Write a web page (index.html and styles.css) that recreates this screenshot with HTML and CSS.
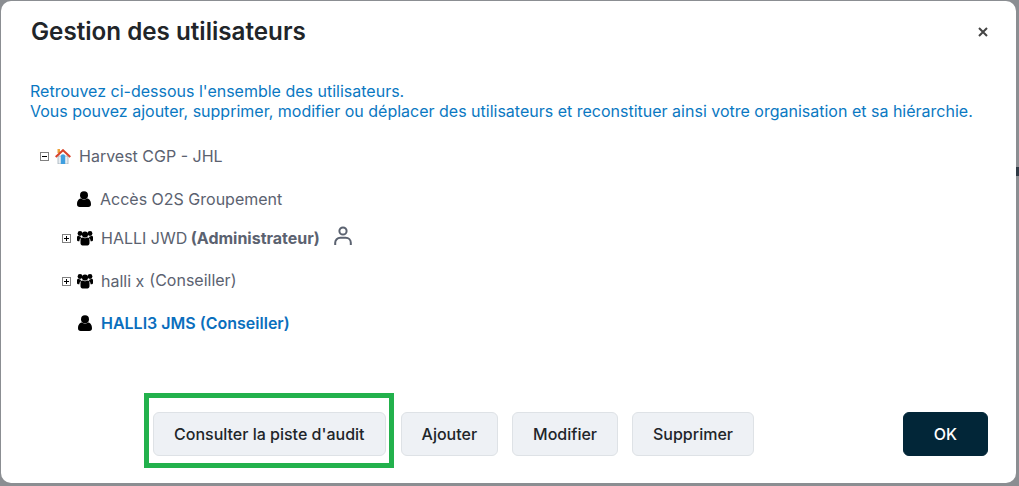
FILE: index.html
```html
<!DOCTYPE html>
<html lang="fr">
<head>
<meta charset="utf-8">
<title>Gestion des utilisateurs</title>
<link rel="stylesheet" href="styles.css">
</head>
<body>
<span class="peek"></span>
<div class="modal">
  <header class="head">
    <h1 class="title">Gestion des utilisateurs</h1>
    <svg class="close" viewBox="0 0 10 10" width="10" height="10"><path d="M1 1L9 9M9 1L1 9"/></svg>
  </header>
  <p class="intro">Retrouvez ci-dessous l'ensemble des utilisateurs.<br>Vous pouvez ajouter, supprimer, modifier ou déplacer des utilisateurs et reconstituer ainsi votre organisation et sa hiérarchie.</p>
  <ul class="tree">
    <li class="root">
      <svg class="tog" viewBox="0 0 9 9" width="9" height="9"><rect x=".5" y=".5" width="8" height="8" class="box"/><path d="M2 4.5H7" class="mark"/></svg>
      <svg class="home" viewBox="0 0 16 15" width="16" height="15"><path d="M2.500 0h2.500v4H2.500z" fill="#eda13a"/><path d="M3 7h10v8H3z" fill="#e9eef2" stroke="#9aa7b2" stroke-width=".7"/><path d="M5.800 7.500a2.200 2.200 0 0 1 4.400 0V15H5.800z" fill="#3f9fe0"/><path d="M0.700 8L8 1.200 15.300 8" fill="none" stroke="#d8432a" stroke-width="2"/></svg>
      <span class="lab">Harvest CGP - JHL</span>
    </li>
    <li class="n1">
      <svg class="user" viewBox="0 0 16 16" width="16" height="16"><use href="#u"/></svg>
      <span class="lab">Accès O2S Groupement</span>
    </li>
    <li class="n2">
      <svg class="tog" viewBox="0 0 9 9" width="9" height="9"><rect x=".5" y=".5" width="8" height="8" class="box"/><path d="M2 4.5H7M4.5 2V7" class="mark"/></svg>
      <svg class="users" viewBox="0 0 16 15" width="16" height="16"><use href="#g"/></svg>
      <span class="lab">HALLI JWD <b>(Administrateur)</b></span>
      <svg class="outline" viewBox="0 0 18 20" width="18" height="20"><circle cx="9" cy="5" r="3.6"/><path d="M1.200 19v-2.200a5 5 0 0 1 5-5h5.600a5 5 0 0 1 5 5V19"/></svg>
    </li>
    <li class="n3">
      <svg class="tog" viewBox="0 0 9 9" width="9" height="9"><rect x=".5" y=".5" width="8" height="8" class="box"/><path d="M2 4.5H7M4.5 2V7" class="mark"/></svg>
      <svg class="users" viewBox="0 0 16 15" width="16" height="16"><use href="#g"/></svg>
      <span class="lab">halli x</span><span class="lab role">(Conseiller)</span>
    </li>
    <li class="n4">
      <svg class="user" viewBox="0 0 16 16" width="16" height="16"><use href="#u"/></svg>
      <span class="lab sel">HALLI3 JMS (Conseiller)</span>
    </li>
  </ul>
  <footer class="foot">
    <div class="audit"><button class="btn">Consulter la piste d'audit</button></div>
    <button class="btn">Ajouter</button>
    <button class="btn">Modifier</button>
    <button class="btn">Supprimer</button>
    <button class="btn ok">OK</button>
  </footer>
</div>
<svg class="defs" width="0" height="0">
  <defs>
    <g id="u"><circle cx="8" cy="4.200" r="4"/><path d="M1 13.200c0-4 2.400-5.700 4-5.700 1 .8 1.900 1.100 3 1.100s2-.3 3-1.100c1.600 0 4 1.700 4 5.700 0 1.700-1 2.800-2.700 2.800H3.700C2 16 1 14.900 1 13.200z"/></g>
    <g id="g"><circle cx="8" cy="4" r="3.100"/><circle cx="3" cy="3" r="2.400"/><circle cx="13" cy="3" r="2.400"/><path d="M3.500 9.500c0-1.700 1-2.500 2-2.500.8.600 1.600.8 2.500.8s1.700-.2 2.500-.8c1 0 2 .8 2 2.500v3.300c0 1.200-.8 2.200-2 2.200H5.500c-1.200 0-2-1-2-2.200z"/><path d="M0 6.800C0 5.800.7 5.300 1.500 5.300c.6.500 1.200.6 1.900.6.300.8.700 1.200 1.100 1.500-1.300.4-2.100 1.400-2.100 3.400H1c-.6 0-1-.5-1-1.200zM16 6.800c0-1-.7-1.500-1.500-1.500-.6.500-1.200.6-1.900.6-.3.8-.7 1.200-1.100 1.500 1.300.4 2.100 1.400 2.100 3.400H15c.6 0 1-.5 1-1.200z"/></g>
  </defs>
</svg>
</body>
</html>
```
FILE: styles.css
```css
* { box-sizing: border-box; }
html, body { margin: 0; height: 100%; }
body {
  background: #8b8e92;
  font-family: Inter, "Liberation Sans", sans-serif;
  overflow: hidden;
  padding: 1px 3px 3px 1px;
}
.peek {
  position: absolute;
  right: 0;
  top: 167px;
  width: 3px;
  height: 9px;
  background: #2f3a45;
}
.modal {
  position: relative;
  height: 482px;
  background: #fff;
  border-radius: 10px;
  padding: 0 29px;
  display: flex;
  flex-direction: column;
}
.head {
  display: flex;
  align-items: center;
  justify-content: space-between;
  height: 60px;
  margin-bottom: 2px;
  padding-left: 1px;
}
.title {
  margin: 0;
  font-size: 24.2px;
  font-weight: 600;
  color: #212529;
}
.close { margin-right: -1px; margin-top: 2px; }
.close path { stroke: #444; stroke-width: 2; fill: none; }
.intro {
  margin: 18px 0 0;
  font-size: 16px;
  line-height: 20px;
  color: #0a78c2;
}
.tree {
  list-style: none;
  margin: 0;
  padding: 0;
  font-size: 16px;
  color: #5b6270;
}
.tree li { display: flex; align-items: center; }
.root { margin: 24px 0 0 10px; height: 22px; }
.root .home { margin-left: 6px; }
.root .lab { margin-left: 8px; }
.n1 { margin: 21px 0 0 46px; height: 22px; }
.n1 .lab { margin-left: 8px; }
.n2 { margin: 17px 0 0 32px; height: 22px; }
.n3 { margin: 21px 0 0 32px; height: 22px; }
.n4 { margin: 20px 0 0 47px; height: 22px; }
.n2 .users, .n3 .users { margin-left: 6px; }
.n2 .lab, .n3 .lab { margin-left: 8px; }
.n3 .role { margin-left: 5px; position: relative; top: -1px; }
.n4 .lab { margin-left: 8px; }
.sel { color: #0a6ebd; font-weight: 600; }
b { font-weight: 700; margin-left: -1px; }
.outline { margin: -5px 0 0 14px; fill: none; stroke: #5b6270; stroke-width: 2; }
.box { fill: #fff; stroke: #808080; }
.mark { stroke: #000; stroke-width: 1; fill: none; }
.user, .users { fill: #000; flex: none; }
.foot {
  position: absolute;
  left: 152px;
  right: 28px;
  top: 411px;
  display: flex;
  gap: 14px;
}
.audit { position: relative; margin-right: 1px; }
.audit::before {
  content: "";
  position: absolute;
  left: -9px;
  right: -8px;
  top: -19px;
  bottom: -12px;
  border: 5px solid #22b14c;
  pointer-events: none;
}
.btn {
  height: 44px;
  padding: 0 20px;
  font: 500 16px Inter, "Liberation Sans", sans-serif;
  color: #212529;
  background: #eef1f5;
  border: 1px solid #dee2e6;
  border-radius: 6px;
}
.ok {
  margin-left: auto;
  padding: 0 30px;
  background: #022638;
  border-color: #022638;
  color: #fff;
}
.defs { position: absolute; }
```
